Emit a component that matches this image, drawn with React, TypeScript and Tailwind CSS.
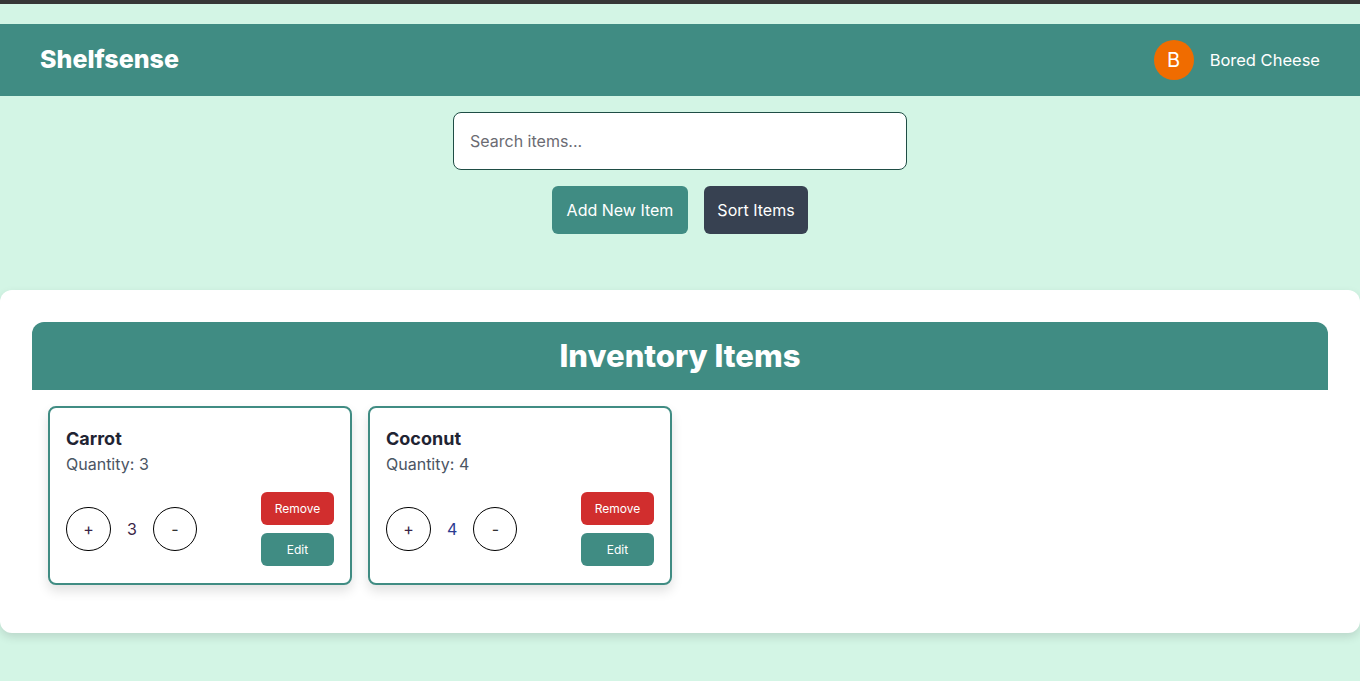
import { useState } from "react";

interface Item {
  id: number;
  name: string;
  quantity: number;
  countColor: string;
}

const ITEMS: Item[] = [
  { id: 1, name: "Carrot", quantity: 3, countColor: "text-[#3b2547]" },
  { id: 2, name: "Coconut", quantity: 4, countColor: "text-[#2b3a8f]" },
];

function ItemCard({ item }: { item: Item }) {
  return (
    <div className="w-[304px] rounded-lg border-2 border-[#408c83] bg-white px-4 pt-[18px] pb-[17px] shadow-[0_6px_12px_rgba(0,0,0,0.12)]">
      <h3 className="text-lg leading-[26px] font-bold text-[#1f2433]">{item.name}</h3>
      <p className="text-base leading-6 text-[#4b5563]">Quantity: {item.quantity}</p>
      <div className="mt-4 flex items-center justify-between">
        <div className="flex items-center gap-4">
          <button className="flex h-[44px] w-[45px] items-center justify-center rounded-full border border-black text-base text-[#3b2547]">
            +
          </button>
          <span className={`text-base ${item.countColor}`}>{item.quantity}</span>
          <button className="flex h-[44px] w-[44px] items-center justify-center rounded-full border border-black text-base text-[#333]">
            -
          </button>
        </div>
        <div className="flex flex-col gap-2">
          <button className="h-[33px] w-[73px] rounded-md bg-[#d12e2e] text-xs text-white">Remove</button>
          <button className="h-[33px] w-[73px] rounded-md bg-[#408c83] text-xs text-white">Edit</button>
        </div>
      </div>
    </div>
  );
}

export default function App() {
  const [query, setQuery] = useState("");

  return (
    <div className="min-h-[681px] bg-[#d3f5e5] font-['Inter','Open_Sans',sans-serif]">
      <div className="h-1 bg-[#363636]" />
      <div className="h-5" />
      <header className="flex h-[72px] items-center justify-between bg-[#408c83] px-10">
        <h1 className="text-[25px] font-extrabold text-white">Shelfsense</h1>
        <div className="flex items-center gap-4">
          <div className="flex h-10 w-10 items-center justify-center rounded-full bg-[#f06c00] text-xl text-white">
            B
          </div>
          <span className="text-[16.5px] text-white">Bored Cheese</span>
        </div>
      </header>

      <div className="flex flex-col items-center pt-4">
        <input
          value={query}
          onChange={(e) => setQuery(e.target.value)}
          placeholder="Search items..."
          className="h-[58px] w-[454px] rounded-lg border border-[#1f4d45] bg-white px-4 text-base text-gray-800 outline-none placeholder:text-[#6b6b72]"
        />
        <div className="mt-4 flex gap-4">
          <button className="h-12 w-[136px] rounded-md bg-[#408c83] text-base text-white">Add New Item</button>
          <button className="h-12 w-[104px] rounded-md bg-[#374151] text-base text-white">Sort Items</button>
        </div>
      </div>

      <section className="mt-14 rounded-xl bg-white p-8 shadow-[0_4px_10px_rgba(0,0,0,0.12)]">
        <div className="flex h-[68px] items-center justify-center rounded-t-xl bg-[#408c83]">
          <h2 className="text-[31px] font-extrabold text-white">Inventory Items</h2>
        </div>
        <div className="flex gap-4 p-4">
          {ITEMS.map((item) => (
            <ItemCard key={item.id} item={item} />
          ))}
        </div>
      </section>
    </div>
  );
}
